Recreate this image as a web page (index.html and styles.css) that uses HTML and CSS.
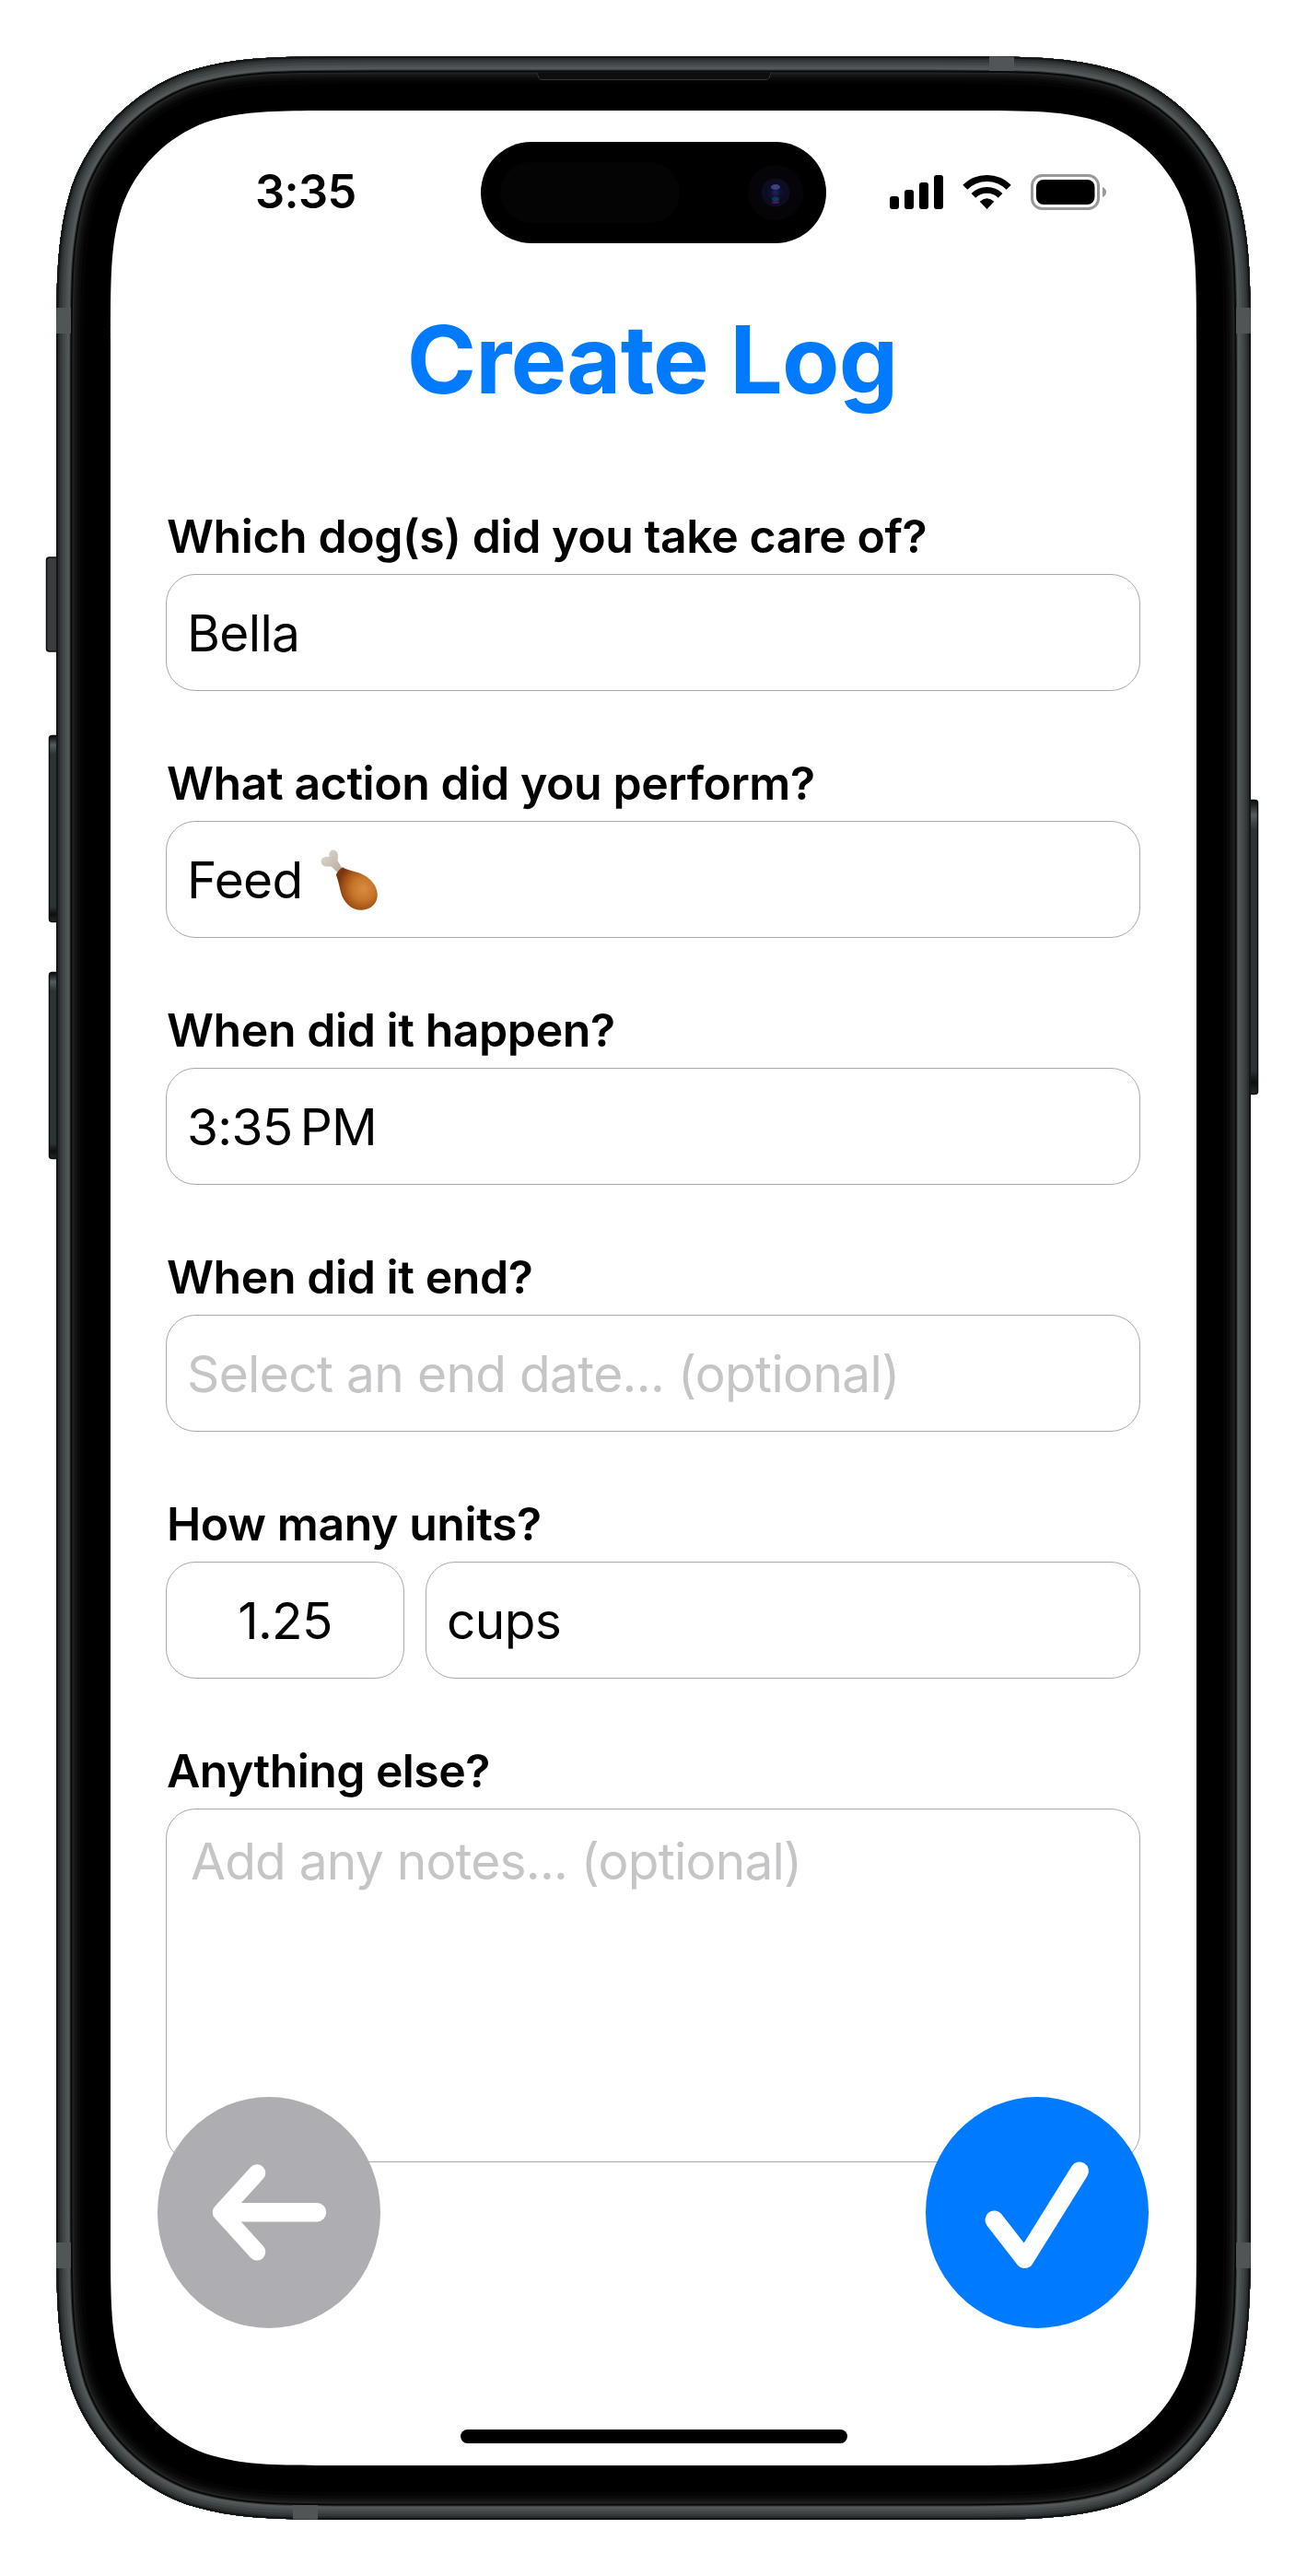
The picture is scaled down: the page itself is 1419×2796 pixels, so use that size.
FILE: index.html
```html
<!DOCTYPE html>
<html lang="en">
<head>
<meta charset="utf-8">
<title>Create Log</title>
<link rel="stylesheet" href="styles.css">
</head>
<body>
<div class="phone">
  <svg class="phone-frame" viewBox="0 0 1419 2796" aria-hidden="true">
    <defs>
      <path id="body" d="M403.4 61H1015.6c98.6 0 147.9 0 200.9 16.8c58 21.1 103.6 66.7 124.7 124.7c16.8 53 16.8 102.3 16.8 200.9V2392.6c0 98.6 0 147.9-16.8 200.9c-21.1 58-66.7 103.6-124.7 124.7c-53 16.8-102.3 16.8-200.9 16.8H403.4c-98.6 0-147.9 0-200.9-16.8c-58-21.1-103.6-66.7-124.7-124.7c-16.8-53-16.8-102.3-16.8-200.9V403.4c0-98.6 0-147.9 16.8-200.9c21.1-58 66.7-103.6 124.7-124.7c53-16.8 102.3-16.8 200.9-16.8z"/>
      <clipPath id="bodyClip"><use href="#body"/></clipPath>
      <linearGradient id="key" x1="0" x2="0" y1="0" y2="1">
        <stop offset="0" stop-color="#0c0e0f"/><stop offset=".02" stop-color="#25292b"/><stop offset=".05" stop-color="#565c5f"/><stop offset=".1" stop-color="#2d3234"/><stop offset=".92" stop-color="#2d3234"/><stop offset=".96" stop-color="#0c0e0f"/><stop offset="1" stop-color="#25292b"/>
      </linearGradient>
      <radialGradient id="lens"><stop offset="0" stop-color="#24245c"/><stop offset=".45" stop-color="#10103a"/><stop offset="1" stop-color="#0a0b1c"/></radialGradient>
    </defs>
    <g stroke="#0c0e0f" stroke-width="1.5">
      <rect x="50.5" y="605" width="16" height="102" rx="3" fill="#3a3c3e"/>
      <rect x="53.5" y="798.5" width="16" height="202" rx="3" fill="url(#key)"/>
      <rect x="53.5" y="1055.5" width="16" height="202" rx="3" fill="url(#key)"/>
      <rect x="1350" y="868.5" width="15.5" height="319" rx="3" fill="url(#key)"/>
    </g>
    <g clip-path="url(#bodyClip)" fill="none">
      <use href="#body" fill="#000"/>
      <use href="#body" stroke="#040404" stroke-width="60"/>
      <use href="#body" stroke="#0a0a0a" stroke-width="52"/>
      <use href="#body" stroke="#121212" stroke-width="46"/>
      <use href="#body" stroke="#1b1b1b" stroke-width="41"/>
      <use href="#body" stroke="#262727" stroke-width="37"/>
      <use href="#body" stroke="#080909" stroke-width="35"/>
      <use href="#body" stroke="#34393b" stroke-width="31"/>
      <use href="#body" stroke="#535959" stroke-width="29"/>
      <use href="#body" stroke="#4b5052" stroke-width="24"/>
      <use href="#body" stroke="#404547" stroke-width="19"/>
      <use href="#body" stroke="#35393b" stroke-width="13"/>
      <use href="#body" stroke="#282c2d" stroke-width="8"/>
      <use href="#body" stroke="#121616" stroke-width="4"/>
      <g fill="#505657">
        <rect x="61" y="334" width="16" height="28"/><rect x="1342" y="334" width="16" height="28"/>
        <rect x="61" y="2434" width="16" height="28"/><rect x="1342" y="2434" width="16" height="28"/>
        <rect x="1074" y="61" width="27" height="16"/><rect x="318" y="2719" width="27" height="16"/>
      </g>
      <path d="M582 79c3 0 1 7.500 6 7.500H832c5 0 3-7.500 6-7.500" fill="#0e0e0e" stroke="#353636"/>
    </g>
    <path fill="#fff" d="M372.2 120H1046.8c72.6 0 108.9 0 148 12.4c42.7 15.5 76.3 49.1 91.8 91.8c12.4 39.1 12.4 75.4 12.4 148V2423.8c0 72.6 0 108.9-12.4 148c-15.5 42.7-49.1 76.3-91.8 91.8c-39.1 12.4-75.4 12.4-148 12.4H372.2c-72.6 0-108.9 0-148-12.4c-42.7-15.5-76.3-49.1-91.8-91.8c-12.4-39.1-12.4-75.4-12.4-148V372.2c0-72.6 0-108.9 12.4-148c15.5-42.7 49.1-76.3 91.8-91.8c39.1-12.4 75.4-12.4 148-12.4z"/>
  </svg>

  <main class="screen">
    <header class="status-bar">
      <span class="clock">3:35</span>
      <svg class="island" viewBox="0 0 375 110" aria-hidden="true">
        <rect width="375" height="110" rx="55"/>
        <rect x="21" y="22" width="195" height="66" rx="33" fill="#040404"/>
        <circle cx="320" cy="55" r="30" fill="#060408"/>
        <circle cx="320" cy="55" r="15.5" fill="#0c0e20"/>
        <circle cx="320" cy="55" r="11" fill="url(#lens)"/>
        <ellipse cx="320" cy="49" rx="5" ry="3" fill="#3c4280"/>
        <ellipse cx="320" cy="62" rx="4" ry="2.5" fill="#0d3b48"/>
        <ellipse cx="320" cy="65.5" rx="4" ry="1.5" fill="#4a1466"/>
      </svg>
      <svg class="indicators" viewBox="0 0 236 40" aria-hidden="true">
        <rect x="0" y="24" width="10" height="14" rx="3"/><rect x="16" y="17" width="10" height="21" rx="3"/><rect x="32" y="9" width="10" height="29" rx="3"/><rect x="48" y="1" width="10" height="37" rx="3"/>
        <g fill="none" stroke="#000">
          <path stroke-width="7.2" d="M81.800 14.300a33.500 33.500 0 0 1 47.400 0"/>
          <path stroke-width="6.6" d="M90.900 23.400a20.700 20.700 0 0 1 29.200 0"/>
        </g>
        <path d="M105.500 38l-7.800-8.200q7.800-7.200 15.600 0z"/>
        <rect x="154.500" y="1.500" width="72" height="36" rx="11" fill="none" stroke="#999" stroke-width="3"/>
        <rect x="159" y="6" width="63.500" height="27" rx="8"/>
        <path d="M231 14q4 2 4 5.500t-4 5.500z" fill="#999"/>
      </svg>
    </header>

    <h1 class="title">Create Log</h1>

    <form class="form">
      <section class="group"><h2 class="label">Which dog(s) did you take care of?</h2><div class="field">Bella</div></section>
      <section class="group"><h2 class="label">What action did you perform?</h2>
        <div class="field">Feed
          <svg class="drumstick" viewBox="0 0 62 66" role="img" aria-label="drumstick">
            <defs>
              <radialGradient id="meat" cx=".66" cy=".5" r=".62"><stop offset="0" stop-color="#d98d40"/><stop offset=".45" stop-color="#c67429"/><stop offset=".8" stop-color="#a04f15"/><stop offset="1" stop-color="#7d360b"/></radialGradient>
              <linearGradient id="bone" x1="0" x2="1" y1="0" y2="1"><stop offset="0" stop-color="#e3dcd3"/><stop offset="1" stop-color="#b5a99d"/></linearGradient>
            </defs>
            <path fill="url(#bone)" d="M9.500 8C8 1 14-1.500 17 2c3 3.500 1.500 7.500 1.500 10l5 8.500-5 4.500-7-6.500C8 18.500 2.500 19.500.800 14.500-.500 10 4.500 6.500 9.500 8z"/>
            <path fill="url(#meat)" d="M24.500 19.500c5 3.500 12 3.500 20 7 9 4 17 12.500 17.300 22.500.2 9-7 16.500-17 16.800C32.500 66 25 56.500 22.500 48c-2-7-3-14-5.500-20-.5-2 5.500-9 7.500-8.500z"/>
          </svg>
        </div>
      </section>
      <section class="group"><h2 class="label">When did it happen?</h2><div class="field"><span>3:35</span><span class="meridiem">PM</span></div></section>
      <section class="group"><h2 class="label">When did it end?</h2><div class="field placeholder">Select an end date... (optional)</div></section>
      <section class="group"><h2 class="label">How many units?</h2>
        <div class="unit-row"><div class="field amount">1.25</div><div class="field">cups</div></div>
      </section>
      <section class="group"><h2 class="label label-notes">Anything else?</h2><div class="field notes placeholder">Add any notes... (optional)</div></section>
    </form>

    <button class="fab back" aria-label="Back"><svg viewBox="0 0 242 251">
      <g fill="none" stroke="#fff" stroke-linecap="round" stroke-linejoin="round">
        <path d="M173 125.300H72" stroke-width="20.500"/>
        <path d="M108 82.500L69 125.300l39 43" stroke-width="18.500"/>
      </g>
    </svg></button>
    <button class="fab save" aria-label="Save"><svg viewBox="0 0 242 251">
      <path d="M74.500 133.500L107.500 176L167 80.500" fill="none" stroke="#fff" stroke-width="20" stroke-linecap="round" stroke-linejoin="round"/>
    </svg></button>
    <div class="home-indicator"></div>
  </main>
</div>
</body>
</html>
```
FILE: styles.css
```css
* { box-sizing: border-box; }

body {
  margin: 0;
  background: #fff;
  color: #000;
  font-family: Inter, "Liberation Sans", sans-serif;
}

.phone {
  position: relative;
  width: 1419px;
  height: 2796px;
  padding: 120px;
}

/* Device body sits behind the screen content */
.phone-frame {
  position: absolute;
  inset: 0;
  width: 100%;
  height: 100%;
}

.screen {
  position: relative;
  width: 1179px;
  height: 2556px;
}

.status-bar {
  display: grid;
  grid-template-columns: 402px 375px 1fr;
  align-items: center;
  padding-top: 34px;
}

.clock {
  margin-top: -2px;
  padding-left: 157px;
  font-size: 50.5px;
  font-weight: 600;
  line-height: 60px;
  letter-spacing: -0.6px;
}

.island {
  display: block;
  width: 375px;
  height: 110px;
}

.indicators {
  width: 236px;
  height: 40px;
  margin: -1px 0 0 69px;
}

.title {
  margin: 66px 3px 0 0;
  color: #007aff;
  font-size: 102px;
  font-weight: 700;
  line-height: 120px;
  letter-spacing: -0.9px;
  text-align: center;
}

.form {
  display: flex;
  flex-direction: column;
  gap: 70px;
  padding: 102px 61px 0 60px;
}

.group {
  display: flex;
  flex-direction: column;
  gap: 11px;
}

.label {
  margin: 0;
  padding-left: 1px;
  font-size: 50px;
  font-weight: 600;
  line-height: 60px;
  letter-spacing: -0.43px;
}

.label-notes { letter-spacing: -0.6px; }

.field {
  display: flex;
  flex: 1;
  align-items: center;
  min-height: 127px;
  padding: 0 22px;
  border: 1px solid #a9a9ac;
  border-radius: 32px;
  font-size: 55px;
  line-height: 60px;
  letter-spacing: -0.65px;
}

.placeholder { color: #c5c5c7; }

.meridiem { margin-left: 8px; }

.drumstick {
  width: 62px;
  height: 66px;
  margin-left: 19px;
}

.unit-row {
  display: grid;
  grid-template-columns: 259px 1fr;
  gap: 23px;
}

.amount { justify-content: center; }

.notes {
  align-items: flex-start;
  min-height: 384px;
  padding: 26px;
  letter-spacing: -0.76px;
}

/* Floating actions overlap the notes field */
.fab {
  position: absolute;
  top: 2156px;
  width: 242px;
  height: 251px;
  padding: 0;
  border: 0;
  border-radius: 50%;
}

.fab svg { display: block; }

.back {
  left: 51px;
  background: #aeaeb2;
}

.save {
  right: 52px;
  background: #007aff;
}

.home-indicator {
  position: absolute;
  bottom: 24px;
  left: 380px;
  width: 420px;
  height: 15px;
  border-radius: 8px;
  background: #000;
}
```
